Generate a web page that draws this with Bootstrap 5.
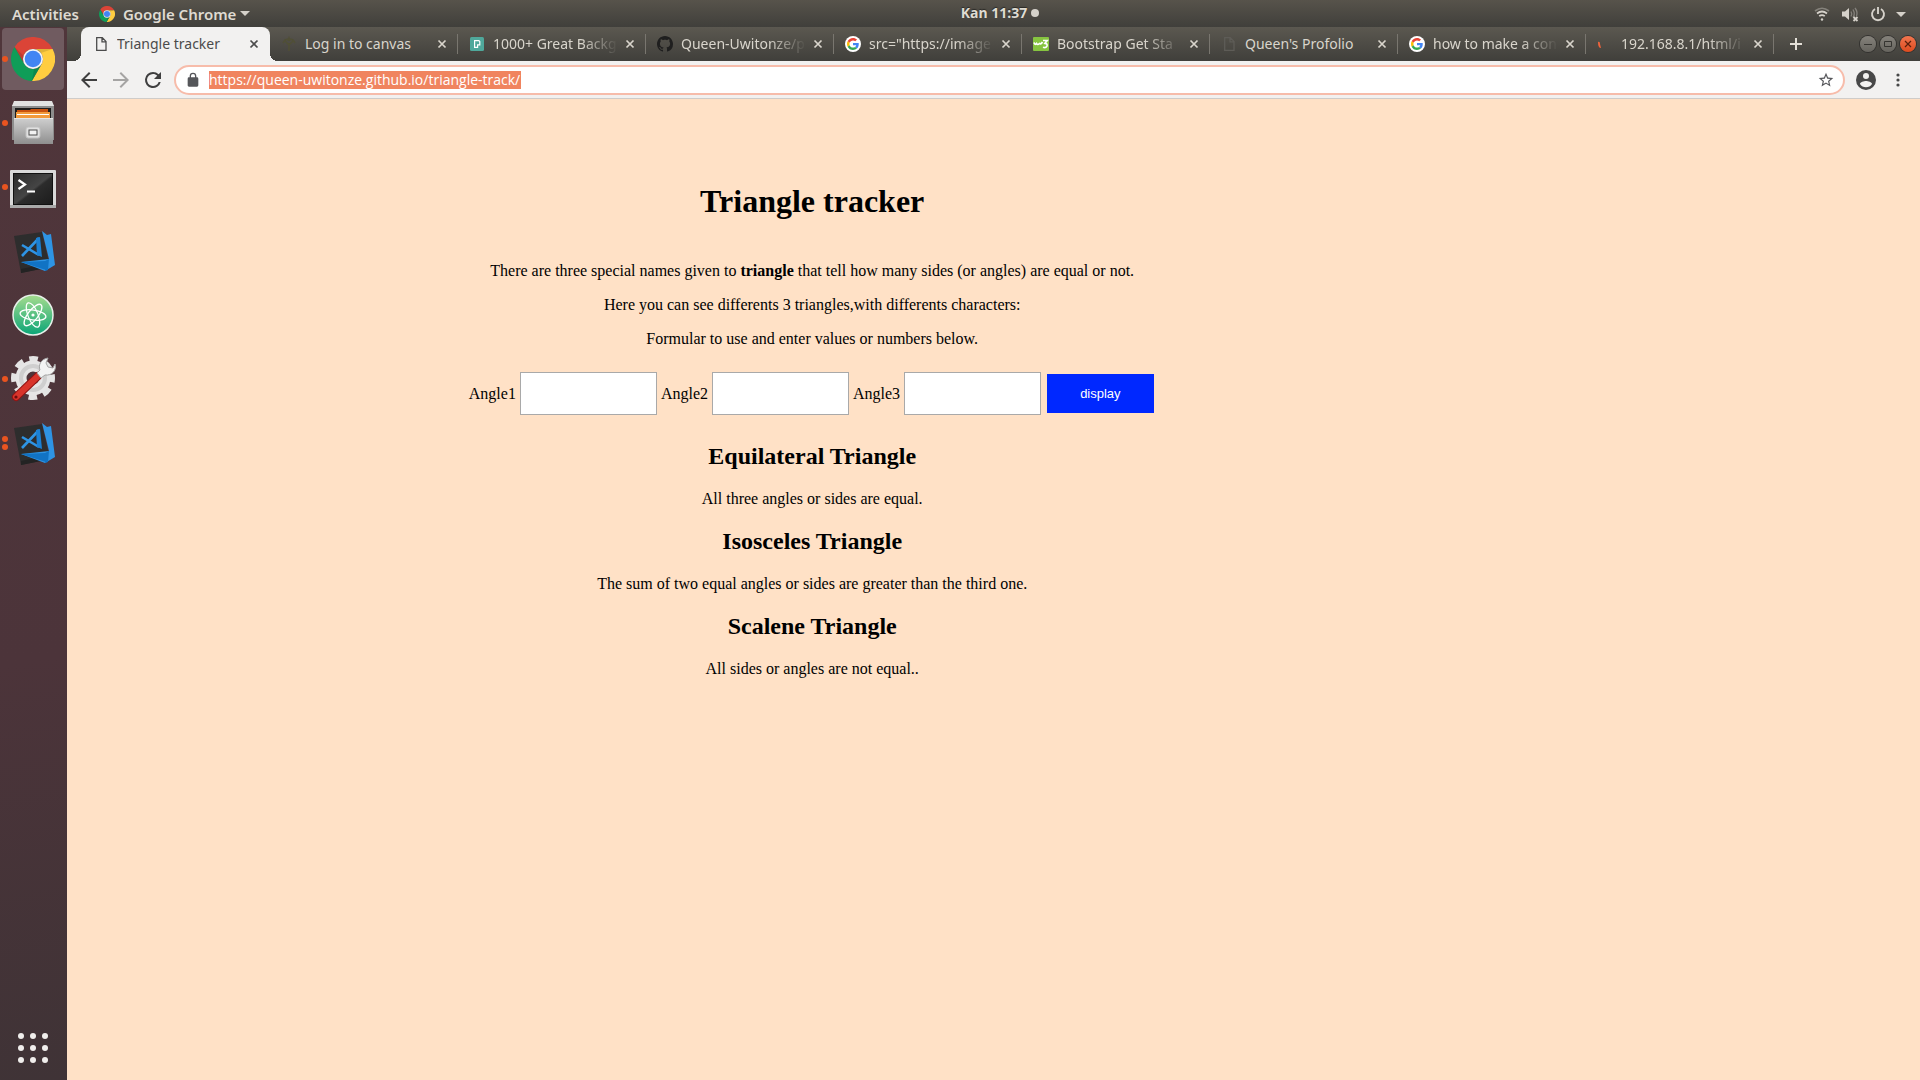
<!DOCTYPE html>
<html lang="en">
<head>
<meta charset="utf-8">
<meta name="viewport" content="width=device-width, initial-scale=1">
<title>Triangle tracker</title>
<link href="https://cdn.jsdelivr.net/npm/bootstrap@5.3.0/dist/css/bootstrap.min.css" rel="stylesheet">
<style>
  body { font-family: "Noto Sans", "Open Sans", sans-serif; font-size: 14px; line-height: 20px; background: #ffe1c6; color: #000; }
  button { border: 0; padding: 0; background: none; color: inherit; }
  svg { display: block; flex: none; }

  .desk-bar { height: 27px; padding: 0 8px 0 12px; background: linear-gradient(#57534b, #403f3b); color: #dfdbd2; font-weight: 600; font-size: 15px; text-shadow: 0 -1px 1px #2a2926; }
  .desk-side { flex: 1 1 0; }
  .desk-clock { font-size: 14px; font-weight: 700; padding-left: 76px; line-height: 18px; padding-bottom: 2px; }
  .clock-dot { width: 8px; height: 8px; background: #d5d1ca; }

  .dock { width: 67px; background: linear-gradient(170deg, #50363b, #4c343a 60%, #3f3336); }
  .dock-tile { width: 67px; height: 64px; }

  .tab-strip { height: 34px; padding-left: 14px; background: linear-gradient(#5b5850, #403f3b); color: #d9d5cc; }
  .tab-item { width: 188px; padding: 0 8px 0 11px; }
  .tab-item + .tab-item::after { content: ""; position: absolute; right: 0; top: 7px; height: 20px; width: 1px; background: #79766f; }
  .tab-item.current { width: 189px; padding-left: 12px; background: #f2f1f0; color: #4b4b4b; border-radius: 8px 8px 0 0; }
  .tab-item.current::before, .tab-item.current::after { content: ""; position: absolute; bottom: 0; width: 8px; height: 8px; }
  .tab-item.current::before { left: -8px; background: radial-gradient(circle at 0 0, transparent 8px, #f2f1f0 8px); }
  .tab-item.current::after { right: -8px; background: radial-gradient(circle at 100% 0, transparent 8px, #f2f1f0 8px); }
  .tab-name { color: inherit; text-decoration: none; margin-left: 8px; margin-right: 4px; min-width: 0; }
  .faded { -webkit-mask-image: linear-gradient(90deg, #000 70%, transparent); mask-image: linear-gradient(90deg, #000 70%, transparent); }
  .new-tab { margin-left: 16px; }
  .win-knob { width: 16px; height: 16px; border-radius: 50%; background: linear-gradient(#85827b, #66645e); box-shadow: 0 0 0 1px #33322f; }
  .win-knob.shut { background: linear-gradient(#f2764f, #dd4a1e); }

  .tool-bar { height: 38px; padding: 0 12px; background: #f2f1f0; border-bottom: 1px solid #cfccc9; color: #4c4c4c; }
  .address { height: 30px; border: 2px solid #f7bcaa; border-radius: 15px; background: #fff; padding: 0 9px; margin: 0 11px; }
  .address input { width: 312px; height: 18px; margin-left: 8px; border: 0; padding: 0; outline: 0; background: #f0845f; color: #fff; font-family: "Open Sans", "Noto Sans", sans-serif; font-size: 14px; line-height: 18px; }

  .site { width: 80%; padding-left: 8px; padding-top: 84px; font-family: "Liberation Serif", serif; font-size: 16px; line-height: 18px; }
  .site h1 { font-size: 32px; line-height: 37px; font-weight: 700; margin: 0 0 42px; }
  .site h2 { font-size: 24px; line-height: 27px; font-weight: 700; margin: 0 0 20px; }
  .site p { margin: 0 0 16px; }
  .site .kind p { margin-bottom: 20px; }
  .angle-form { gap: 4px; margin: 24px 0 28px; }
  .angle-form input { width: 137px; height: 43px; border: 1px solid #a9a9a9; background: #fff; padding: 12px; }
  .angle-form button { background: #0028ff; color: #fff; font-family: "Liberation Sans", sans-serif; font-size: 13px; line-height: 15px; padding: 12px 33px; margin: 0 2px; }
</style>
</head>
<body class="min-vh-100 d-flex flex-column">

<svg width="0" height="0" class="position-absolute" aria-hidden="true">
  <defs>
    <linearGradient id="metal" x1="0" y1="0" x2="0" y2="1"><stop offset="0" stop-color="#cfcfcf"/><stop offset="1" stop-color="#8f8f8f"/></linearGradient>
    <linearGradient id="screen" x1="0" y1="0" x2="1" y2="1"><stop offset="0" stop-color="#2b2b2b"/><stop offset=".5" stop-color="#454545"/><stop offset=".55" stop-color="#2c2c2c"/><stop offset="1" stop-color="#1c1c1c"/></linearGradient>
    <linearGradient id="leaf" x1="0" y1="0" x2="0" y2="1"><stop offset="0" stop-color="#a5dc8e"/><stop offset="1" stop-color="#0aa577"/></linearGradient>
    <linearGradient id="ribbon" x1="0" y1="0" x2="0" y2="1"><stop offset="0" stop-color="#4aa8f0"/><stop offset="1" stop-color="#1173c4"/></linearGradient>
    <symbol id="chrome" viewBox="-22 -22 44 44">
      <path fill="#db4437" d="M0-10H19.600A22 22 0 0 0-18.460-11.970L-8.660 5A10 10 0 0 1 0-10Z"/>
      <path fill="#ffcd40" d="M8.660 5L-1.140 21.970A22 22 0 0 0 19.600-10H0A10 10 0 0 1 8.660 5Z"/>
      <path fill="#0f9d58" d="M-8.660 5L-18.460-11.970A22 22 0 0 0-1.140 21.970L8.660 5A10 10 0 0 1-8.660 5Z"/>
      <path fill="#000" opacity=".12" d="M0-10H19.600L8-6ZM-8.660 5L-18.460-11.970-9-3ZM8.660 5L-1.140 21.970 1 10Z"/>
      <circle r="10" fill="#f5f5f5"/><circle r="8.300" fill="#4285f4"/>
    </symbol>
    <symbol id="google" viewBox="0 0 16 16">
      <circle cx="8" cy="8" r="8" fill="#fff"/>
      <g transform="translate(2 2) scale(.25)">
        <path fill="#ea4335" d="M24 9.500c3.540 0 6.710 1.220 9.210 3.600l6.850-6.850C35.900 2.380 30.470 0 24 0 14.620 0 6.510 5.380 2.560 13.220l7.980 6.190C12.430 13.720 17.740 9.500 24 9.500z"/>
        <path fill="#4285f4" d="M46.980 24.550c0-1.570-.15-3.090-.38-4.550H24v9.020h12.940c-.58 2.960-2.260 5.480-4.780 7.180l7.730 6c4.510-4.180 7.090-10.360 7.090-17.650z"/>
        <path fill="#fbbc05" d="M10.530 28.590c-.48-1.450-.76-2.990-.76-4.590s.27-3.140.76-4.590l-7.980-6.190C.92 16.460 0 20.120 0 24c0 3.880.92 7.540 2.560 10.780l7.970-6.190z"/>
        <path fill="#34a853" d="M24 48c6.480 0 11.930-2.130 15.890-5.810l-7.730-6c-2.150 1.450-4.920 2.300-8.160 2.300-6.260 0-11.570-4.220-13.470-9.910l-7.980 6.190C6.510 42.620 14.620 48 24 48z"/>
      </g>
    </symbol>
    <symbol id="sheet" viewBox="0 0 16 16"><path fill="none" stroke="currentColor" stroke-width="1.300" d="M3.700 1.700h5.600l3.700 3.700v9H3.700zM9 2v3.800h4"/></symbol>
    <symbol id="cross" viewBox="0 0 16 16"><path fill="none" stroke="currentColor" stroke-width="1.700" d="M4.500 4.500l7 7m0-7l-7 7"/></symbol>
    <symbol id="code" viewBox="0 0 44 44">
      <path fill="#2d2d2d" d="M1 6l28-4 8 35-29 6z"/><path fill="#232323" d="M8 43l30-6-1-4-29 6z"/>
      <path fill="#2e94e4" d="M29 1l9 3-4 1zM29 1l7 28-28 3 24 9 10-6L38 4z"/><path fill="#1173c4" d="M8 32l24-1 1 9zM32 31l4-2-1 11-3 1z"/>
      <path fill="none" stroke="#2e94e4" stroke-width="2.600" d="M9 15l17 10M9 26L26 8"/><path fill="#1b80d3" d="M23 8l4-1 2 20-5-2z"/>
    </symbol>
  </defs>
</svg>

<header class="desk-bar d-flex align-items-center">
  <div class="desk-side d-flex align-items-center">
    <button type="button" class="fw-semibold">Activities</button>
    <button type="button" class="d-flex align-items-center fw-semibold ms-3 ps-1">
      <svg width="16" height="16" class="me-1"><use href="#chrome"/></svg>
      <span class="ms-1">Google Chrome</span>
      <svg width="10" height="6" class="ms-1" viewBox="0 0 10 6"><path fill="#d5d1ca" d="M0 0h10L5 5z"/></svg>
    </button>
  </div>
  <div class="desk-clock d-flex align-items-center gap-1"><time>Kan 11:37</time><span class="clock-dot rounded-circle"></span></div>
  <div class="desk-side d-flex align-items-center justify-content-end gap-2" role="status">
    <svg width="20" height="16" viewBox="0 0 20 16" fill="none" stroke="#d5d1ca" stroke-width="1.700"><path opacity=".4" d="M3 5q7-5.500 14 0"/><path d="M5 7.500q5-4 10 0M7.200 10.200q2.800-2.300 5.600 0"/><circle cx="10" cy="13.500" r="1.200" fill="#d5d1ca" stroke="none"/></svg>
    <svg width="20" height="16" viewBox="0 0 20 16"><path fill="#d5d1ca" d="M2 5.500h3L9 2v12L5 10.500H2z"/><path fill="none" stroke="#85827c" stroke-width="1.300" d="M11 5.500q1.500 2.500 0 5M13 3.500q2.500 4.500 0 8M15 2q3 4 1.500 8"/><path stroke="#d5d1ca" stroke-width="1.800" d="M13.500 11l4 4m0-4l-4 4"/></svg>
    <svg width="20" height="16" viewBox="0 0 20 16" fill="none" stroke="#d5d1ca" stroke-width="1.900"><path d="M7 3a6 6 0 1 0 6 0M10 1v7"/></svg>
    <svg width="16" height="16" viewBox="0 0 16 16"><path fill="#d5d1ca" d="M0 6h10L5 11z"/></svg>
  </div>
</header>

<div class="d-flex flex-grow-1 align-items-stretch">
  <nav class="dock d-flex flex-column flex-shrink-0" aria-label="Dock">
    <button type="button" class="dock-tile" aria-label="Chrome"><svg width="67" height="64"><rect x="2" y="1" width="62" height="62" rx="4" fill="#705b60"/><circle cx="5" cy="32" r="3" fill="#e95420"/><use href="#chrome" x="11" y="10" width="44" height="44"/></svg></button>
    <button type="button" class="dock-tile" aria-label="Files"><svg width="67" height="64">
      <circle cx="5" cy="32" r="3" fill="#e95420"/>
      <path fill="#8d8d8d" d="M12 14h42v35H12z"/><path fill="#e2e2e2" d="M14 10h38l2 5H12z"/><path fill="#1d1d1d" d="M15 17h36v10H15z"/>
      <path fill="#c9520f" d="M17 19h13l1-1h17v4H17z"/><path fill="#f29a3b" d="M16 21h34v6H16z"/><path fill="#fff" d="M17 23h32v1H17z"/>
      <path fill="url(#metal)" d="M14 27h39v26H14z"/><path fill="#e6e6e6" d="M14 27h39v1H14z"/>
      <rect x="26" y="36" width="14" height="11" rx="2" fill="#e0e0e0" stroke="#c0c0c0"/><rect x="29" y="39" width="8" height="5" fill="#f2f2f2" stroke="#4d4d4d"/></svg></button>
    <button type="button" class="dock-tile" aria-label="Terminal"><svg width="67" height="64">
      <circle cx="5" cy="32" r="3" fill="#e95420"/>
      <rect x="10" y="15" width="46" height="38" rx="1" fill="#d9d9d9"/><path fill="#a9a9a9" d="M10 50h46v3H10z"/><rect x="13" y="18" width="40" height="32" fill="#111"/><rect x="14" y="19" width="38" height="30" fill="url(#screen)"/>
      <path fill="none" stroke="#fff" stroke-width="2.200" d="M18.500 25l6.500 4.500-6.500 4.500M27 36.500h8"/></svg></button>
    <button type="button" class="dock-tile" aria-label="Visual Studio Code"><svg width="67" height="64"><use href="#code" x="13" y="11" width="44" height="44"/></svg></button>
    <button type="button" class="dock-tile" aria-label="Atom"><svg width="67" height="64">
      <circle cx="33" cy="32" r="20" fill="url(#leaf)" stroke="#e8f0ea" stroke-width="1.500"/>
      <g fill="none" stroke="#fff" stroke-width="1.300"><ellipse cx="33" cy="32" rx="13" ry="5" transform="rotate(8 33 32)"/><ellipse cx="33" cy="32" rx="13" ry="5" transform="rotate(68 33 32)"/><ellipse cx="33" cy="32" rx="13" ry="5" transform="rotate(128 33 32)"/></g><circle cx="33" cy="32" r="1.600" fill="#fff"/></svg></button>
    <button type="button" class="dock-tile" aria-label="Settings"><svg width="67" height="64">
      <circle cx="5" cy="32" r="3" fill="#e95420"/>
      <circle cx="33" cy="31" r="19" fill="none" stroke="#e4e4e4" stroke-width="6" stroke-dasharray="8.500 6.420" stroke-dashoffset="4.250"/>
      <circle cx="33" cy="31" r="12" fill="none" stroke="#e6e6e6" stroke-width="11"/><circle cx="33" cy="31" r="12" fill="none" stroke="#cfcfcf" stroke-width="4"/>
      <path stroke="#8f1414" stroke-width="8" stroke-linecap="round" d="M16 50L38 29"/><path stroke="#d8342b" stroke-width="6" stroke-linecap="round" d="M16 50L38 29"/><circle cx="16" cy="50" r="1.600" fill="#6d0d0d"/>
      <path fill="#f3f3f3" stroke="#a5a5a5" d="M37 26l3-3c-2-5 1-11 8-12l-2 5 2 4 5 1 2-4c2 6-3 12-10 11l-4 3z"/></svg></button>
    <button type="button" class="dock-tile" aria-label="Visual Studio Code, two windows"><svg width="67" height="64"><circle cx="5" cy="28" r="3" fill="#e95420"/><circle cx="5" cy="36" r="3" fill="#e95420"/><use href="#code" x="13" y="11" width="44" height="44"/></svg></button>
    <button type="button" class="dock-tile mt-auto" aria-label="Show applications"><svg width="67" height="64" fill="#f0eeec"><g id="dots3"><circle cx="21" cy="20" r="3"/><circle cx="33" cy="20" r="3"/><circle cx="45" cy="20" r="3"/></g><use href="#dots3" y="12"/><use href="#dots3" y="24"/></svg></button>
  </nav>

  <div class="flex-grow-1 d-flex flex-column">
    <div class="tab-strip d-flex align-items-stretch">
      <div class="tab-item current position-relative d-flex align-items-center"><svg width="16" height="16"><use href="#sheet"/></svg><a href="#" class="tab-name flex-grow-1 text-nowrap overflow-hidden">Triangle tracker</a><button type="button" aria-label="Close tab"><svg width="16" height="16"><use href="#cross"/></svg></button></div>
      <div class="tab-item position-relative d-flex align-items-center"><svg width="16" height="16" viewBox="0 0 16 16" fill="none" stroke="#504f36" stroke-width="1.500"><path d="M8 15V7M8 9L4 5M8 9l4-4M2 7l2-3 3-1M9 3l3 1 2 3M7 5l1-3 1 3"/></svg><a href="#" class="tab-name flex-grow-1 text-nowrap overflow-hidden">Log in to canvas</a><button type="button" aria-label="Close tab"><svg width="16" height="16"><use href="#cross"/></svg></button></div>
      <div class="tab-item position-relative d-flex align-items-center"><svg width="16" height="16" viewBox="0 0 16 16"><rect x="1" y="1" width="14" height="14" rx="1.500" fill="#4fa89b"/><path fill="none" stroke="#fff" stroke-width="1.200" d="M5.600 4.600h4.200l1 1v3.200H8.600v2.600h-3z"/></svg><a href="#" class="tab-name faded flex-grow-1 text-nowrap overflow-hidden">1000+ Great Backg</a><button type="button" aria-label="Close tab"><svg width="16" height="16"><use href="#cross"/></svg></button></div>
      <div class="tab-item position-relative d-flex align-items-center"><svg width="16" height="16" viewBox="0 0 16 16"><path fill="#1f1f1f" d="M8 0C3.580 0 0 3.580 0 8c0 3.540 2.290 6.530 5.470 7.590.4.07.55-.17.55-.38 0-.19-.01-.82-.01-1.490-2.010.37-2.530-.49-2.690-.94-.09-.23-.48-.94-.82-1.130-.28-.15-.68-.52-.01-.53.63-.01 1.080.58 1.230.82.72 1.210 1.870.87 2.330.66.07-.52.28-.87.51-1.070-1.780-.2-3.640-.89-3.640-3.950 0-.87.31-1.590.82-2.150-.08-.2-.36-1.020.08-2.120 0 0 .67-.21 2.200.82.64-.18 1.320-.27 2-.27s1.360.09 2 .27c1.530-1.040 2.200-.82 2.200-.82.44 1.100.16 1.920.08 2.120.51.56.82 1.270.82 2.150 0 3.070-1.870 3.750-3.650 3.950.29.25.54.73.54 1.480 0 1.070-.01 1.930-.01 2.200 0 .21.15.46.55.38A8.010 8.010 0 0 0 16 8c0-4.420-3.580-8-8-8z"/></svg><a href="#" class="tab-name faded flex-grow-1 text-nowrap overflow-hidden">Queen-Uwitonze/p</a><button type="button" aria-label="Close tab"><svg width="16" height="16"><use href="#cross"/></svg></button></div>
      <div class="tab-item position-relative d-flex align-items-center"><svg width="16" height="16"><use href="#google"/></svg><a href="#" class="tab-name faded flex-grow-1 text-nowrap overflow-hidden">src="https://image</a><button type="button" aria-label="Close tab"><svg width="16" height="16"><use href="#cross"/></svg></button></div>
      <div class="tab-item position-relative d-flex align-items-center"><svg width="16" height="16" viewBox="0 0 16 16"><rect y="1" width="16" height="14" rx="1" fill="#86c440"/><path fill="none" stroke="#fff" stroke-width="1.700" d="M1 6.500q1 3 2.500 1 1 2 3 0 1.500 1 3-1.500M10 4.500h4.200L12 7.300q2.500.2 2 2.700-.8 2.200-4 1.200"/></svg><a href="#" class="tab-name faded flex-grow-1 text-nowrap overflow-hidden">Bootstrap Get Sta</a><button type="button" aria-label="Close tab"><svg width="16" height="16"><use href="#cross"/></svg></button></div>
      <div class="tab-item position-relative d-flex align-items-center"><svg width="16" height="16" color="#5e5c57"><use href="#sheet"/></svg><a href="#" class="tab-name flex-grow-1 text-nowrap overflow-hidden">Queen's Profolio</a><button type="button" aria-label="Close tab"><svg width="16" height="16"><use href="#cross"/></svg></button></div>
      <div class="tab-item position-relative d-flex align-items-center"><svg width="16" height="16"><use href="#google"/></svg><a href="#" class="tab-name faded flex-grow-1 text-nowrap overflow-hidden">how to make a con</a><button type="button" aria-label="Close tab"><svg width="16" height="16"><use href="#cross"/></svg></button></div>
      <div class="tab-item position-relative d-flex align-items-center"><svg width="16" height="16" viewBox="0 0 16 16"><path fill="#f0643c" d="M1 6q2-1 2 2l1 4q-3 0-3-6z"/></svg><a href="#" class="tab-name faded flex-grow-1 text-nowrap overflow-hidden">192.168.8.1/html/i</a><button type="button" aria-label="Close tab"><svg width="16" height="16"><use href="#cross"/></svg></button></div>
      <button type="button" class="new-tab" aria-label="New tab"><svg width="12" height="12" viewBox="0 0 12 12"><path stroke="#e4e0d8" stroke-width="2" d="M6 0v12M0 6h12"/></svg></button>
      <div class="d-flex align-items-center gap-1 ms-auto me-1">
        <button type="button" class="win-knob" aria-label="Minimize"><svg width="16" height="16"><path stroke="#353430" d="M4 8.500h8"/></svg></button>
        <button type="button" class="win-knob" aria-label="Maximize"><svg width="16" height="16"><path fill="none" stroke="#353430" d="M4.500 5.500h7v5h-7z"/></svg></button>
        <button type="button" class="win-knob shut" aria-label="Close window"><svg width="16" height="16"><path stroke="#5a1f0c" stroke-width="1.200" d="M5 5l6 6m0-6l-6 6"/></svg></button>
      </div>
    </div>

    <div class="tool-bar d-flex align-items-center">
      <div class="d-flex gap-2">
        <button type="button" aria-label="Back"><svg width="20" height="20" viewBox="2 2 20 20"><path fill="#3f3f3f" d="M20 11H7.830l5.590-5.590L12 4l-8 8 8 8 1.410-1.410L7.830 13H20v-2z"/></svg></button>
        <button type="button" class="mx-1" aria-label="Forward"><svg width="20" height="20" viewBox="2 2 20 20"><path fill="#a5a4a3" d="M12 4l-1.410 1.410L16.170 11H4v2h12.170l-5.580 5.590L12 20l8-8z"/></svg></button>
        <button type="button" aria-label="Reload"><svg width="20" height="20" viewBox="2 2 20 20"><path fill="#3f3f3f" d="M17.650 6.350A7.960 7.960 0 0 0 12 4a8 8 0 1 0 7.730 10h-2.080A6 6 0 1 1 12 6c1.660 0 3.140.69 4.220 1.780L13 11h7V4l-2.350 2.350z"/></svg></button>
      </div>
      <div class="address flex-grow-1 d-flex align-items-center">
        <svg width="16" height="16" viewBox="0 0 24 24"><path fill="#55565a" d="M18 8h-1V6A5 5 0 0 0 7 6v2H6a2 2 0 0 0-2 2v10c0 1.100.9 2 2 2h12a2 2 0 0 0 2-2V10a2 2 0 0 0-2-2zM9 8V6a3 3 0 0 1 6 0v2z"/></svg>
        <input type="text" aria-label="Address" value="https://queen-uwitonze.github.io/triangle-track/">
        <button type="button" class="ms-auto" aria-label="Bookmark this page"><svg width="16" height="16" viewBox="1 1 22 22"><path fill="#55565a" d="M22 9.240l-7.190-.62L12 2 9.190 8.630 2 9.240l5.460 4.730L5.820 21 12 17.270 18.180 21l-1.630-7.030zM12 15.400l-3.760 2.270 1-4.280-3.320-2.880 4.380-.38L12 6.100l1.710 4.040 4.380.38-3.320 2.880 1 4.280z"/></svg></button>
      </div>
      <button type="button" aria-label="Profile"><svg width="20" height="20" viewBox="2 2 20 20"><path fill="#484848" fill-rule="evenodd" d="M12 2a10 10 0 1 0 0 20 10 10 0 0 0 0-20zm0 3a3 3 0 1 1 0 6 3 3 0 0 1 0-6zm0 14.200a7.200 7.200 0 0 1-6-3.220c.03-1.990 4-3.080 6-3.080s5.970 1.090 6 3.080a7.200 7.200 0 0 1-6 3.220z"/></svg></button>
      <button type="button" class="ms-3" aria-label="Menu"><svg width="16" height="16" viewBox="0 0 16 16" fill="#484848"><circle cx="6" cy="3" r="1.600"/><circle cx="6" cy="8" r="1.600"/><circle cx="6" cy="13" r="1.600"/></svg></button>
    </div>

    <main class="site text-center">
      <h1>Triangle tracker</h1>
      <p>There are three special names given to <strong>triangle</strong> that tell how many sides (or angles) are equal or not.</p>
      <p>Here you can see differents 3 triangles,with differents characters:</p>
      <p>Formular to use and enter values or numbers below.</p>
      <form class="angle-form d-flex align-items-center justify-content-center">
        <label for="angle1">Angle1</label><input type="text" id="angle1">
        <label for="angle2">Angle2</label><input type="text" id="angle2">
        <label for="angle3">Angle3</label><input type="text" id="angle3">
        <button type="button">display</button>
      </form>
      <section class="kind">
        <h2>Equilateral Triangle</h2>
        <p>All three angles or sides are equal.</p>
        <h2>Isosceles Triangle</h2>
        <p>The sum of two equal angles or sides are greater than the third one.</p>
        <h2>Scalene Triangle</h2>
        <p>All sides or angles are not equal..</p>
      </section>
    </main>
  </div>
</div>
<script src="https://cdn.jsdelivr.net/npm/bootstrap@5.3.0/dist/js/bootstrap.bundle.min.js"></script>
</body>
</html>
